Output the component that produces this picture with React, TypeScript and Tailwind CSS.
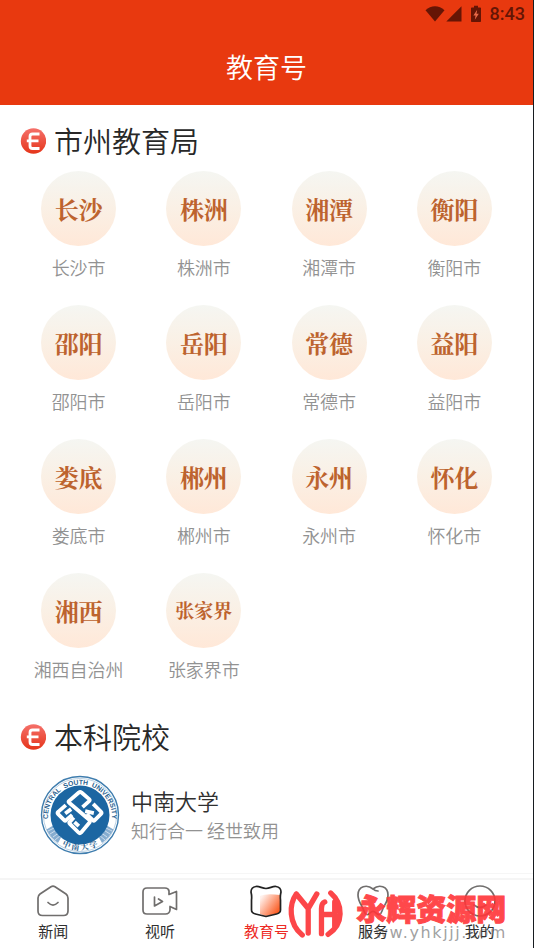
import type { ReactNode } from "react";

const cities = [
  { badge: "长沙", name: "长沙市" },
  { badge: "株洲", name: "株洲市" },
  { badge: "湘潭", name: "湘潭市" },
  { badge: "衡阳", name: "衡阳市" },
  { badge: "邵阳", name: "邵阳市" },
  { badge: "岳阳", name: "岳阳市" },
  { badge: "常德", name: "常德市" },
  { badge: "益阳", name: "益阳市" },
  { badge: "娄底", name: "娄底市" },
  { badge: "郴州", name: "郴州市" },
  { badge: "永州", name: "永州市" },
  { badge: "怀化", name: "怀化市" },
  { badge: "湘西", name: "湘西自治州" },
  { badge: "张家界", name: "张家界市" },
];

function StatusBar() {
  return (
    <div className="flex h-7 items-center justify-end px-2 text-[#651505]">
      <svg width="20" height="16" viewBox="0 0 20 16" fill="currentColor" aria-hidden="true">
        <path d="M0.5 4.2C6-1 14-1 19.5 4.2L10 15.6Z" />
      </svg>
      <svg className="ml-px" width="16" height="16" viewBox="0 0 16 16" fill="currentColor" aria-hidden="true">
        <path d="M15.5 0.3V15.6H0.3Z" />
      </svg>
      <svg className="mx-2" width="12" height="18" viewBox="0 0 12 18" fill="currentColor" aria-hidden="true">
        <path d="M4 0.8h4v1.6h2.2a.8.8 0 0 1 .8.8v13a.8.8 0 0 1-.8.8H1.8a.8.8 0 0 1-.8-.8v-13a.8.8 0 0 1 .8-.8H4Z" />
        <path d="M7.2 4.8 3.4 10.6h2.2L4.8 14.8 8.8 8.8H6.5Z" fill="#e96a48" />
      </svg>
      <span className="font-[Roboto,sans-serif] text-lg font-medium">8:43</span>
    </div>
  );
}

function SectionTitle({ id, children }: { id: string; children: ReactNode }) {
  return (
    <h2 className="flex items-center gap-2 px-5 text-[29px] leading-[38px] font-[350] text-[#282828]">
      <svg width="26" height="26" viewBox="0 0 26 26" aria-hidden="true">
        <defs>
          <linearGradient id={id} x1="0" y1="0" x2="0" y2="1">
            <stop offset="0" stopColor="#f5706a" />
            <stop offset="1" stopColor="#e5351a" />
          </linearGradient>
        </defs>
        <circle cx="13.5" cy="13" r="12.7" fill={`url(#${id})`} />
        <path
          d="M19.500 6H12.500Q10 6 10 8.500V18Q10 20.500 12.500 20.500H19.500M6.800 12.800H18.500"
          fill="none"
          stroke="#fff"
          strokeWidth="2.800"
        />
      </svg>
      <span className="pb-0.5">{children}</span>
    </h2>
  );
}

function UniversityLogo() {
  return (
    <svg className="shrink-0" width="80" height="80" viewBox="0 0 80 80" role="img" aria-label="中南大学">
      <defs>
        <path id="arcTop" d="M10.500 54A32 32 0 1 1 69.500 54" />
        <path id="arcBottom" d="M16 66A36 36 0 0 0 64 66" />
      </defs>
      <circle cx="40" cy="40" r="38.500" fill="#fff" stroke="#3f7dae" strokeWidth="1.4" />
      <circle cx="40" cy="40" r="36.600" fill="none" stroke="#9fbfd8" strokeWidth="0.7" />
      <path d="M6.500 54.500 14 50 21 62.500 18 68Q10 62 6.500 54.500ZM73.500 54.500 66 50 59 62.500 62 68Q70 62 73.500 54.500Z" fill="#86add0" />
      <path d="M8 56l8-4M10 59l8-5M13 62l7-5M15 65l6-5M72 56l-8-4M70 59l-8-5M67 62l-7-5M65 65l-6-5" stroke="#fff" strokeWidth="0.6" />
      <circle cx="40" cy="40" r="29.500" fill="#1c66a2" />
      <g
        transform="translate(14.500 13.500) scale(0.3333)"
        fill="none"
        stroke="#fff"
        strokeWidth="11.500"
        strokeLinejoin="round"
      >
        <path d="M84 56 104 38Q107 35 104 32L81 12Q77 9 73 12L44 37Q40 40 44 43L104 94Q108 98 105 102L80 132Q76 136 72 132L46 106Q43 103 46 100L58 87M60 101 73 113" />
        <path d="M34 50 11 70Q7 73 11 77L29 95Q32 98 35 95L53 79M50 62 32 75" />
        <path d="M116 46 139 69Q143 73 139 77L121 95Q118 98 115 95L96 77M92 68 118 74" />
      </g>
      <text className="font-[Liberation_Sans,sans-serif]" fontSize="6.800" fontWeight="bold" fill="#2a5f8f">
        <textPath href="#arcTop" startOffset="50%" textAnchor="middle">
          {"CENTRAL\u00a0\u00a0SOUTH\u00a0\u00a0UNIVERSITY"}
        </textPath>
      </text>
      <text className="font-[Noto_Serif_CJK_SC,Noto_Sans_CJK_SC,serif]" fontSize="8" fontWeight="bold" fill="#2a5f8f">
        <textPath href="#arcBottom" startOffset="50%" textAnchor="middle">
          中 南 大 学
        </textPath>
      </text>
    </svg>
  );
}

const iconProps = {
  width: 36,
  height: 34,
  viewBox: "0 0 36 34",
  fill: "none",
  stroke: "#706e6d",
  strokeWidth: 1.7,
  strokeLinecap: "round" as const,
  strokeLinejoin: "round" as const,
  "aria-hidden": true,
};

const tabs = [
  {
    label: "新闻",
    icon: (
      <svg {...iconProps}>
        <path d="M16 2.800Q18 1.500 20 2.800L31 10Q33 11.500 33 14V27Q33 31.500 28.500 31.500H7.500Q3 31.500 3 27V14Q3 11.500 5 10ZM13 18.500Q18 23.500 23 18.500" />
      </svg>
    ),
  },
  {
    label: "视听",
    icon: (
      <svg {...iconProps}>
        <path d="M5 4H23Q26.500 4 27 7V10.500L34.500 7.500V25.500L28 22.500V26Q27.500 30 23.500 30H5Q1 30 1 26V8Q1 4 5 4ZM12.500 13V22L20.500 17.500 16.500 15" />
      </svg>
    ),
  },
  {
    label: "教育号",
    active: true,
    icon: (
      <svg {...iconProps} stroke="#222">
        <defs>
          <linearGradient id="activeTab" x1="0.100" y1="0.100" x2="1" y2="0.800">
            <stop offset="0" stopColor="#fff1ec" />
            <stop offset="1" stopColor="#fb5215" />
          </linearGradient>
        </defs>
        <path d="M12 12Q18 9 32 11V25Q32 29 28 30L18 32 12 30Z" fill="url(#activeTab)" stroke="none" />
        <path d="M8 2.500C11.500 2 14 4.500 18 4.500S24.500 2 28 2.500C31.500 3 33 5.500 33 8Q32 12 32.500 16V26Q32.500 29 28.500 30L18 32.500 7.500 30Q3.500 29 3.500 26V16Q4 12 3 8C3 5.500 4.500 3 8 2.500Z" />
      </svg>
    ),
  },
  {
    label: "服务",
    icon: (
      <svg {...iconProps}>
        <path d="M18 5C24 0 33 2 33 11C33 18 29 21 27 27Q25 33 21 29Q18 26 15 29Q11 33 9 27C7 21 3 18 3 11C3 2 12 0 18 5ZM18 5Q20 7 23 7" />
      </svg>
    ),
  },
  {
    label: "我的",
    icon: (
      <svg {...iconProps}>
        <circle cx="18" cy="17" r="15" />
        <path d="M12 21Q18 26 24 21" />
      </svg>
    ),
  },
];

function Watermark() {
  return (
    <div className="pointer-events-none absolute right-[26px] bottom-[7px] flex items-center gap-2">
      <svg
        width="63"
        height="53"
        viewBox="0 20 190 160"
        fill="none"
        stroke="#fc4649"
        strokeWidth="16"
        strokeLinecap="round"
        aria-hidden="true"
      >
        <path d="M34 38C12 68 10 128 52 162M34 38 70 82 96 38M70 82V156" />
        <path d="M110 158V82Q110 66 120 62M110 100H148M150 62V136M138 35C176 68 178 128 130 160" />
      </svg>
      <div className="flex flex-col">
        <span className="text-[30px] leading-9 font-black text-[#ff3538] opacity-90 [-webkit-text-stroke:1px_#ff3538]">
          永辉资源网
        </span>
        <span className="pl-1 font-[DejaVu_Sans,sans-serif] text-base leading-4 tracking-widest text-[#888888cc]">
          www.yhkjjj.com
        </span>
      </div>
    </div>
  );
}

export default function App() {
  return (
    <div className="relative flex min-h-screen flex-col border-r border-[#171c20] bg-white font-[Noto_Sans_CJK_SC,sans-serif]">
      <header className="bg-[#e8390f] pb-4">
        <StatusBar />
        <h1 className="pt-4 text-center text-[27px] leading-[45px] font-[350] text-white">教育号</h1>
      </header>

      <main className="flex-1">
        <section className="pt-4">
          <SectionTitle id="cityMark">市州教育局</SectionTitle>
          <ul className="grid grid-cols-4 gap-y-[26px] px-4 pt-[10px]">
            {cities.map((city) => (
              <li key={city.name}>
                <a href="#" className="flex flex-col items-center gap-[9px]">
                  <span
                    className={`flex size-[75px] items-center justify-center rounded-full bg-linear-to-b from-[#f5f6f2] via-[#faf0e5] to-[#ffe8d8] font-['Noto_Serif_CJK_SC','Noto_Sans_CJK_SC',serif] font-bold text-[#bd632e] ${
                      city.badge.length > 2 ? "text-[19px]" : "text-2xl"
                    }`}
                  >
                    {city.badge}
                  </span>
                  <span className="text-lg leading-6 font-[350] whitespace-nowrap text-[#929292]">{city.name}</span>
                </a>
              </li>
            ))}
          </ul>
        </section>

        <section className="pt-9">
          <SectionTitle id="collegeMark">本科院校</SectionTitle>
          <a href="#" className="ml-10 flex items-center gap-[11px] border-b border-[#f6f6f6] py-[18px]">
            <UniversityLogo />
            <span className="flex flex-col pb-0.5">
              <span className="text-[22px] leading-8 font-[350] text-[#303030]">中南大学</span>
              <span className="text-lg leading-7 font-[350] text-[#929292]">知行合一 经世致用</span>
            </span>
          </a>
        </section>
      </main>

      <nav className="relative grid grid-cols-5 border-t-2 border-[#f5f5f5] bg-white pt-1 pb-[5px]">
        {tabs.map((tab) => (
          <button
            key={tab.label}
            type="button"
            className={`flex flex-col items-center gap-px text-[15px] leading-6 ${
              tab.active ? "text-[#ed2a24]" : "text-[#303030]"
            }`}
          >
            {tab.icon}
            <span className="relative z-10 text-shadow-[0_0_2px_#fff]">{tab.label}</span>
          </button>
        ))}
        <Watermark />
      </nav>
    </div>
  );
}
